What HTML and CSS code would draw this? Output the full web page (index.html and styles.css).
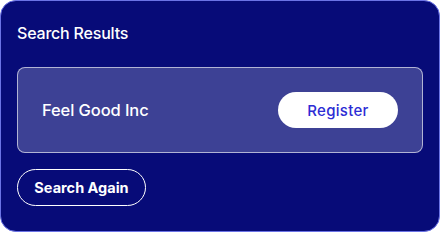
FILE: index.html
```html
<!DOCTYPE html>
<html>
<head>
<meta charset="utf-8">
<link rel="stylesheet" href="styles.css">
</head>
<body>
<div class="panel">
  <h2 class="title">Search Results</h2>
  <div class="result">
    <span class="name">Feel Good Inc</span>
    <button class="register">Register</button>
  </div>
  <button class="again">Search Again</button>
</div>
</body>
</html>
```
FILE: styles.css
```css
html, body {
  margin: 0;
  padding: 0;
  background: #ffffff;
}
.panel {
  box-sizing: border-box;
  width: 440px;
  height: 232px;
  background: #070b78;
  border: 1px solid #6b73e6;
  border-radius: 16px;
  padding: 20px 16px 16px;
  font-family: Inter, "Noto Sans", sans-serif;
  color: #ffffff;
  display: flex;
  flex-direction: column;
  align-items: flex-start;
}
.title {
  margin: 0;
  font-size: 16px;
  line-height: 24px;
  font-weight: 500;
  letter-spacing: -0.2px;
}
.result {
  box-sizing: border-box;
  margin-top: 22px;
  align-self: stretch;
  height: 86px;
  background: #3d4195;
  border: 1px solid rgba(255, 255, 255, 0.6);
  border-radius: 8px;
  padding: 0 24px;
  display: flex;
  align-items: center;
  justify-content: space-between;
}
.name {
  font-size: 16.5px;
  font-weight: 500;
  letter-spacing: -0.1px;
}
.register {
  box-sizing: border-box;
  width: 120px;
  height: 36px;
  border: none;
  border-radius: 18px;
  background: #ffffff;
  color: #2c2cd4;
  font-family: inherit;
  font-size: 15px;
  font-weight: 500;
  letter-spacing: 0.3px;
  padding: 0;
}
.again {
  box-sizing: border-box;
  margin-top: 16px;
  height: 37px;
  width: 129px;
  padding: 0;
  border: 1px solid #ffffff;
  border-radius: 19px;
  background: transparent;
  color: #ffffff;
  font-family: inherit;
  font-size: 14.5px;
  font-weight: 700;
}
```
